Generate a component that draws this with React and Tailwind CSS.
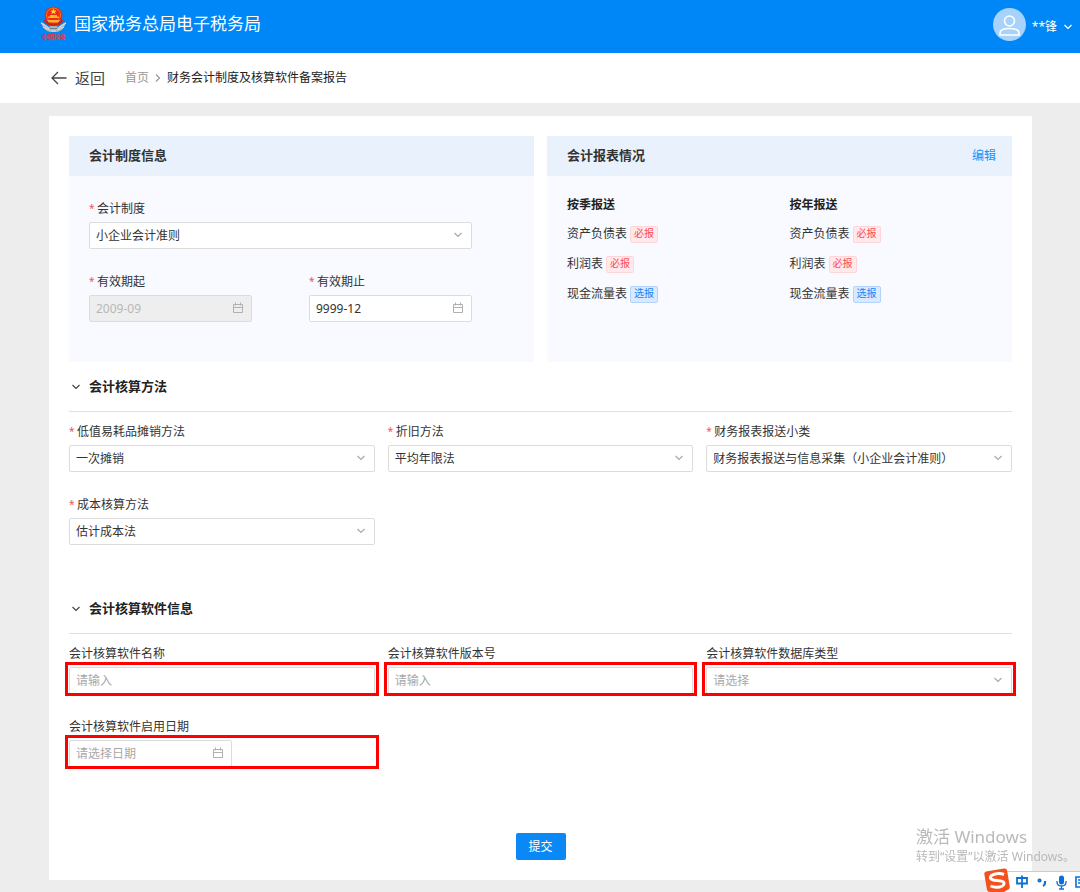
import { useId } from "react";

const Chevron = ({ className = "" }) => (
  <svg viewBox="0 0 10 10" className={`h-[10px] w-[10px] ${className}`} fill="none" stroke="currentColor" strokeWidth="1.200" aria-hidden="true">
    <path d="M1.500 3L5 6.500 8.500 3" />
  </svg>
);

const CalendarIcon = () => (
  <svg viewBox="0 0 12 12" className="pointer-events-none absolute top-[7px] right-2 h-3 w-3 text-[#b0b0b0]" fill="none" stroke="currentColor" aria-hidden="true">
    <path d="M1.500 2.500h9v8h-9zM1.500 5.500h9M3.500 0.500v3M8.500 0.500v3" />
  </svg>
);

const controlBase =
  "block h-[27px] w-full appearance-none rounded-[2px] border border-[#dcdcdc] pl-[6px] pr-6 text-xs outline-none placeholder:text-[#a8a8a8]";

function Field({ label, required, type = "text", value, placeholder, disabled, narrow, highlight }) {
  const id = useId();
  return (
    <div className="min-w-0">
      <label htmlFor={id} className="flex h-[26px] items-center text-xs text-[#333]">
        {required && <span className="w-2 shrink-0 text-[10px] text-[#f5505a]">*</span>}
        {label}
      </label>
      <div className="relative">
        <div className={narrow ? "relative w-[163px]" : "relative"}>
          {type === "select" ? (
            <>
              <select id={id} className={`${controlBase} bg-white ${value ? "text-[#333]" : "text-[#a8a8a8]"}`}>
                <option>{value || placeholder}</option>
              </select>
              <Chevron className="pointer-events-none absolute top-2 right-[9px] text-[#aaa]" />
            </>
          ) : (
            <input
              id={id}
              type="text"
              defaultValue={value}
              placeholder={placeholder}
              disabled={disabled}
              className={`${controlBase} ${disabled ? "bg-[#eee] text-[#b8b8b8]" : "bg-white text-[#333]"}`}
            />
          )}
          {type === "date" && <CalendarIcon />}
        </div>
        {highlight && (
          <div className="pointer-events-none absolute -top-[5px] -right-[4px] -bottom-[2px] -left-[4px] border-[3px] border-[#fe0000]" />
        )}
      </div>
    </div>
  );
}

function Section({ title, className, children }) {
  return (
    <section className={className}>
      <button type="button" className="flex h-[50px] w-full items-center gap-2 border-b border-[#e0e0e0] pl-[2px] text-left">
        <Chevron className="text-[#444]" />
        <h2 className="text-[13px] font-bold text-[#222]">{title}</h2>
      </button>
      <div className="mt-[7px] grid grid-cols-3 gap-x-[13px] gap-y-5">{children}</div>
    </section>
  );
}

function Panel({ title, action, children }) {
  return (
    <section className="flex min-h-[226px] flex-col bg-[#f8faff]">
      <div className="flex h-10 items-center justify-between bg-[#e9f2fc] pr-4 pl-5">
        <h2 className="text-[13px] font-bold text-[#333]">{title}</h2>
        {action}
      </div>
      <div className="p-5">{children}</div>
    </section>
  );
}

const reports = [
  { name: "资产负债表", required: true },
  { name: "利润表", required: true },
  { name: "现金流量表", required: false },
];

function ReportList({ title }) {
  return (
    <div>
      <h3 className="flex h-[18px] items-center text-xs font-bold text-[#222]">{title}</h3>
      <ul className="mt-[5px]">
        {reports.map((r) => (
          <li key={r.name} className="flex h-[30px] items-center gap-[3px] text-xs text-[#333]">
            {r.name}
            <span
              className={`flex h-[17px] items-center rounded-[2px] border px-[3px] text-[10px] ${
                r.required ? "border-[#ffd6d8] bg-[#ffe9ea] text-[#fa4b55]" : "border-[#b3d3ff] bg-[#d9e9ff] text-[#1386f5]"
              }`}
            >
              {r.required ? "必报" : "选报"}
            </span>
          </li>
        ))}
      </ul>
    </div>
  );
}

const Emblem = () => (
  <div className="flex w-[27px] flex-col items-center">
    <svg viewBox="0 0 27 27" className="h-[27px] w-[27px]" aria-hidden="true">
      <path d="M1 16c3 1 5 3 7 5h11c2-2 4-4 7-5-1 5-4 9-9 10h-7C5 25 2 21 1 16z" fill="#a9b4bd" />
      <path d="M1 17l8 5M3 21l7 3M26 17l-8 5M24 21l-7 3" stroke="#d5dce1" strokeWidth="1.200" />
      <path d="M8 18h11l-2 5h-7z" fill="#75808c" />
      <path d="M10 21h7M11 25h5" stroke="#dfe5e9" />
      <circle cx="13.500" cy="9.500" r="9" fill="#e52916" />
      <circle cx="13.500" cy="9" r="7" fill="#f02b12" stroke="#f7771d" strokeWidth="1" />
      <path d="M13.500 2.500l1 2 2 .2-1.500 1.300.5 2-2-1-2 1 .5-2-1.500-1.300 2-.2z" fill="#ffd53b" />
      <path d="M8 12h11v-1.500h-2V9h-7v1.500H8zM7 14h13l-2 2.500H9z" fill="#ffb02d" />
      <path d="M4.500 14c2 4 5 5 9 5s7-1 9-5" stroke="#d4200f" strokeWidth="2" fill="none" />
    </svg>
    <span className="text-[6px] leading-[8px] font-bold whitespace-nowrap text-[#f2352a]">中国税务</span>
  </div>
);

export default function App() {
  return (
    <div className="flex min-h-screen flex-col bg-[#ededed] font-['Noto_Sans','Noto_Sans_CJK_SC',sans-serif] text-[#333]">
      <header className="flex h-[53px] items-center justify-between bg-[#0087f7] pr-[7px] pl-10 text-white">
        <div className="flex items-center gap-[7px] pb-[6px]">
          <Emblem />
          <h1 className="text-[17px] leading-6">国家税务总局电子税务局</h1>
        </div>
        <button type="button" className="flex items-center gap-[6px] text-xs">
          <svg viewBox="0 0 33 33" className="-mt-1 h-[33px] w-[33px]" aria-hidden="true">
            <circle cx="16.500" cy="16.500" r="16.500" fill="#a6d2fb" />
            <g fill="none" stroke="#fff" strokeWidth="1.600">
              <circle cx="16.500" cy="13" r="5" />
              <path d="M7 27v-2c0-3.500 4-4.500 9.500-4.500S26 21.500 26 25v2z" />
            </g>
          </svg>
          <span>**锋</span>
          <Chevron />
        </button>
      </header>

      <nav className="flex h-[50px] items-center bg-white pl-[51px] text-xs" aria-label="面包屑">
        <button type="button" className="flex items-center gap-2 text-[15px] text-[#444]">
          <svg viewBox="0 0 16 14" className="h-[14px] w-4" fill="none" stroke="currentColor" strokeWidth="1.300" aria-hidden="true">
            <path d="M15.500 7H1M7 1L1 7l6 6" />
          </svg>
          返回
        </button>
        <a href="#home" className="ml-5 text-[#999]">首页</a>
        <Chevron className="mx-1 -rotate-90 text-[#999]" />
        <span className="text-[#222]">财务会计制度及核算软件备案报告</span>
      </nav>

      <main className="mt-[13px] mr-12 mb-3 ml-[49px] bg-white p-5">
        <div className="grid grid-cols-2 gap-[13px]">
          <Panel title="会计制度信息">
            <div className="mr-[42px] grid grid-cols-1 gap-y-5">
              <Field label="会计制度" required type="select" value="小企业会计准则" />
              <div className="flex justify-between">
                <Field label="有效期起" required type="date" value="2009-09" disabled narrow />
                <Field label="有效期止" required type="date" value="9999-12" narrow />
              </div>
            </div>
          </Panel>
          <Panel
            title="会计报表情况"
            action={<button type="button" className="text-xs text-[#1890ff]">编辑</button>}
          >
            <div className="grid grid-cols-2 gap-5">
              <ReportList title="按季报送" />
              <ReportList title="按年报送" />
            </div>
          </Panel>
        </div>

        <Section title="会计核算方法">
          <Field label="低值易耗品摊销方法" required type="select" value="一次摊销" />
          <Field label="折旧方法" required type="select" value="平均年限法" />
          <Field label="财务报表报送小类" required type="select" value="财务报表报送与信息采集（小企业会计准则）" />
          <Field label="成本核算方法" required type="select" value="估计成本法" />
        </Section>

        <Section title="会计核算软件信息" className="mt-[39px]">
          <Field label="会计核算软件名称" placeholder="请输入" highlight />
          <Field label="会计核算软件版本号" placeholder="请输入" highlight />
          <Field label="会计核算软件数据库类型" type="select" placeholder="请选择" highlight />
          <Field label="会计核算软件启用日期" type="date" placeholder="请选择日期" narrow highlight />
        </Section>

        <div className="mt-[66px] flex justify-center">
          <button type="button" className="h-[27px] w-[50px] rounded-[2px] bg-[#0a88f5] text-xs text-white">提交</button>
        </div>
      </main>

      <div className="pointer-events-none fixed right-0 bottom-[26px] w-[164px] whitespace-nowrap text-[#b9b9b9]">
        <p className="text-[17px] leading-[22px]">激活 Windows</p>
        <p className="text-xs leading-[18px]">转到“设置”以激活 Windows。</p>
      </div>

      <div className="fixed right-0 bottom-0 flex h-6 w-24 items-end">
        <svg viewBox="0 0 96 24" className="h-6 w-24" role="img" aria-label="输入法">
          <path d="M14 3.500H96V24H14z" fill="#fff" />
          <path d="M14 3.500H96" stroke="#b9cfe8" />
          <path d="M2 3.500Q0 4 .3 6L3 22q.5 2 3 2h14l5-3q1-1 .7-3L23 2q-.5-2-3-1.500z" fill="#f4511e" />
          <path d="M20 6.500C15 4.500 6 6 6.500 10c.4 4 13 1 13.500 5 .4 4-8 5.500-13.500 3" fill="none" stroke="#fff" strokeWidth="3" />
          <g fill="none" stroke="#0870d8" strokeWidth="1.800">
            <path d="M33 10h10v5.500H33zM38 7.500V20" />
            <circle cx="55.500" cy="12.500" r="1.200" />
            <path d="M61 13v2q0 2-2 3" strokeWidth="2.200" />
            <path d="M73 13v1q0 4 4.500 4t4.500-4v-1M77.500 18v3M75 21h5" strokeWidth="1.300" />
            <path d="M97 9h-5v10h5M94 12h2M94 15h2" strokeWidth="1.600" />
          </g>
          <rect x="75" y="7.500" width="5" height="9" rx="2.500" fill="#0870d8" />
        </svg>
      </div>
    </div>
  );
}
